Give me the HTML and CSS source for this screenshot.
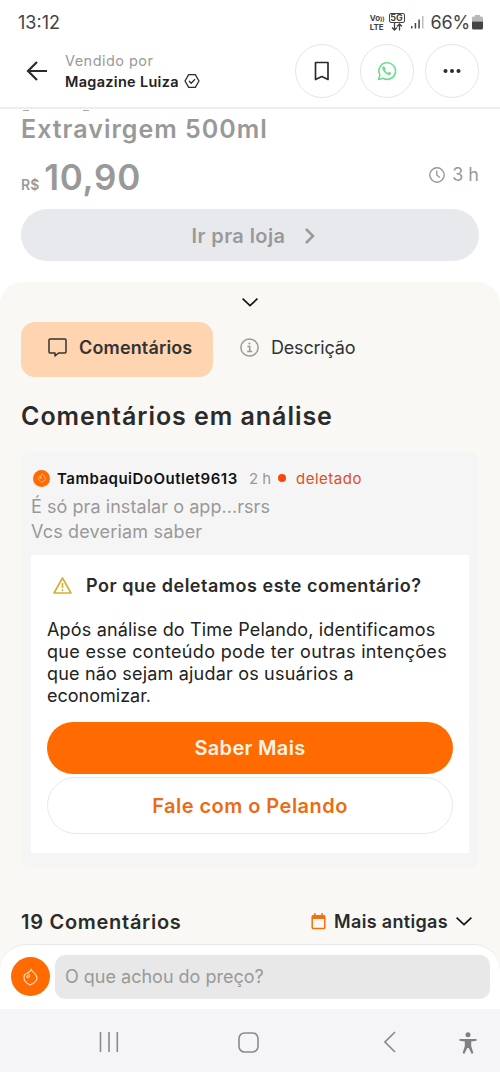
FILE: index.html
```html
<!DOCTYPE html>
<html lang="pt-BR">
<head>
<meta charset="utf-8">
<title>Pelando</title>
<link rel="stylesheet" href="styles.css">
</head>
<body>
<div class="screen">
  <div class="status">
    <span class="clock">13:12</span>
    <div class="signals">
      <span class="volte"><span>Vo<i>))</i></span><span>LTE</span></span>
      <span class="net"><b>5G</b>
        <svg width="12" height="8" viewBox="0 0 12 8" fill="none" stroke="#444" stroke-width="1.3"><path d="M3.5 0v7M1 4.5 3.5 7 6 4.5M8.5 7.5V1M6 3.5 8.500 1 11 3.500"/></svg>
      </span>
      <svg class="bars" width="13" height="14" viewBox="0 0 13 14"><path d="M0 11h1.500v2.500H0zM3.700 8h1.500v5.500H3.700zM7.300 4.500h1.500v9H7.300z" fill="#444"/><path d="M11 1h1.500v12.500H11z" fill="#bbb"/></svg>
      <span class="percent">66%</span>
      <svg class="battery" width="11" height="15" viewBox="0 0 11 15"><path d="M3 0h5v1.500h1.500A1.500 1.500 0 0 1 11 3v3.500H0V3a1.500 1.500 0 0 1 1.500-1.500H3z" fill="#b8b8b8"/><path d="M0 6.500h11V13a1.500 1.500 0 0 1-1.500 1.500h-8A1.500 1.500 0 0 1 0 13z" fill="#444"/></svg>
    </div>
  </div>

  <header class="header">
    <svg class="back" width="22" height="20" viewBox="0 0 22 20" fill="none" stroke="#2b2b2b" stroke-width="2.200"><path d="M21 10H2M11 1 2 10l9 9"/></svg>
    <div class="seller">
      <span class="sold-by">Vendido por</span>
      <span class="store"><span class="store-name">Magazine Luiza</span>
        <svg width="16" height="16" viewBox="0 0 16 16" fill="none" stroke="#2b2b2b" stroke-width="1.300" stroke-linejoin="round"><path d="M4.700 1.700h6.600L15 8l-3.700 6.300H4.700L1 8z"/><path d="m5 8 2.200 2.200L11 6.300"/></svg>
      </span>
    </div>
    <div class="actions">
      <span class="round"><svg width="16" height="20" viewBox="0 0 16 20" fill="none" stroke="#2b2b2b" stroke-width="1.700" stroke-linejoin="round"><path d="M1.500 1.500h12.500v17L7.800 15.500 1.500 18.500z"/></svg></span>
      <span class="round"><svg width="20" height="20" viewBox="0 0 20 20" fill="none" stroke="#6edb90" stroke-width="1.600"><path d="M1.600 18.400 2.900 13.900A8.300 8.300 0 1 1 6.100 17.200z" stroke-linejoin="round"/><path d="M7.200 5.400c-.4-.2-.9-.1-1.200.2-.6.600-.9 1.400-.6 2.300.4 1.300 1.200 2.500 2.200 3.500 1.100 1.100 2.400 2 3.900 2.500.9.200 1.900-.1 2.500-.9.300-.4.300-1 .1-1.300l-2-1-1.300 1.200C9.600 11.400 8.500 10.300 8 9.100l.8-1.300z" fill="#6edb90" stroke="none"/></svg></span>
      <span class="round"><svg width="18" height="4" viewBox="0 0 18 4" fill="#2b2b2b"><circle cx="2.500" cy="2" r="2"/><circle cx="9" cy="2" r="2"/><circle cx="15.500" cy="2" r="2"/></svg></span>
    </div>
  </header>

  <section class="product">
    <div class="title"><span class="tails"><i></i><i></i></span><span class="title-line">Extravirgem 500ml</span></div>
    <div class="price-row">
      <span class="currency">R$</span><span class="price">10,90</span>
      <span class="age"><svg width="16" height="16" viewBox="0 0 16 16" fill="none" stroke="#999" stroke-width="1.400"><circle cx="8" cy="8" r="7.200"/><path d="M7.800 3.500V8l3 2.500"/></svg><span class="age-text">3 h</span></span>
    </div>
    <div class="buy"><span class="buy-text">Ir pra loja</span><svg width="10" height="16" viewBox="0 0 10 16" fill="none" stroke="#999" stroke-width="2.500"><path d="m1 1 7 7-7 7"/></svg></div>
  </section>

  <main class="sheet">
    <svg class="grip" width="16" height="9" viewBox="0 0 16 9" fill="none" stroke="#111" stroke-width="1.600"><path d="m.6.700 7.400 7 7.400-7"/></svg>
    <nav class="tabs">
      <span class="tab active"><svg width="19" height="19" viewBox="0 0 19 19" fill="none" stroke="#333" stroke-width="1.500" stroke-linejoin="round"><path d="M2 1h15q1 0 1 1v12q0 1-1 1h-6.500L7 18v-3H2q-1 0-1-1V2q0-1 1-1z"/></svg><span class="tab-main">Comentários</span></span>
      <span class="tab"><svg width="19" height="19" viewBox="0 0 19 19" fill="none" stroke="#999" stroke-width="1.500"><circle cx="9.500" cy="9.500" r="8.600"/><path d="M7.400 8.400h2.300v5M7.200 13.400h5"/><circle cx="9.400" cy="5.500" r="1" fill="#999" stroke="none"/></svg><span class="tab-desc">Descrição</span></span>
    </nav>
    <h1 class="heading">Comentários em análise</h1>
    <article class="comment">
      <div class="meta">
        <span class="mini"><svg width="8" height="10" viewBox="0 0 15 18" fill="none" stroke="#ffd0a5" stroke-width="1.400" stroke-linejoin="round"><path d="M4 5C5.500 4.500 8 3 8 1c.5 3 6 4.500 6 9 0 3.500-3.500 5.500-7 7-3-1.500-6-4-6-7.500 0-2.500 1.500-4 3-4 3 0 3 4 1 4.200-1.500 0-1.400-1.900 0-2"/></svg></span>
        <span class="user">TambaquiDoOutlet9613</span><span class="when">2 h</span><span class="dot"></span><span class="deleted">deletado</span>
      </div>
      <p class="body"><span class="b1">É só pra instalar o app...rsrs</span><br><span class="b2">Vcs deveriam saber</span></p>
      <div class="reason">
        <div class="why"><svg width="19" height="17" viewBox="0 0 19 17" fill="none" stroke="#d6ae2c" stroke-width="1.600" stroke-linejoin="round"><path d="M9.500 1 18 16H1z"/><path d="M9.500 6v5M9.500 12.300v1.700"/></svg><span class="why-text">Por que deletamos este comentário?</span></div>
        <p class="explain"><span class="p1">Após análise do Time Pelando, identificamos</span><br><span class="p2">que esse conteúdo pode ter outras intenções</span><br><span class="p3">que não sejam ajudar os usuários a</span><br><span class="p4">economizar.</span></p>
        <div class="btn solid"><span>Saber Mais</span></div>
        <div class="btn outline"><span>Fale com o Pelando</span></div>
      </div>
    </article>
    <div class="list-head">
      <span class="count">19 Comentários</span>
      <span class="sort"><svg width="15" height="17" viewBox="0 0 15 17"><rect x="1.200" y="2.700" width="12.600" height="12.800" rx="1" fill="none" stroke="#f4700c" stroke-width="1.500"/><path d="M1 2.500h13V6H1zM3.200 0h1.500v3H3.200zM10.300 0h1.500v3h-1.500z" fill="#f4700c"/></svg><span class="sort-text">Mais antigas</span><svg width="16" height="9" viewBox="0 0 16 9" fill="none" stroke="#111" stroke-width="1.600"><path d="m.6.700 7.400 7 7.400-7"/></svg></span>
    </div>
  </main>

  <div class="dock">
    <footer class="composer">
      <span class="avatar"><svg width="15" height="18" viewBox="0 0 15 18" fill="none" stroke="#ffd9b5" stroke-width="1.200" stroke-linejoin="round"><path d="M4 5C5.500 4.500 8 3 8 1c.5 3 6 4.500 6 9 0 3.500-3.500 5.500-7 7-3-1.500-6-4-6-7.500 0-2.500 1.500-4 3-4 3 0 3 4 1 4.200-1.500 0-1.400-1.900 0-2"/></svg></span>
      <span class="input"><span class="placeholder">O que achou do preço?</span></span>
    </footer>
  </div>

  <div class="sysnav">
    <svg class="recents" width="20" height="20" viewBox="0 0 20 20" stroke="#8a8a8a" stroke-width="1.600"><path d="M1.500 0v20M10 0v20M18.300 0v20"/></svg>
    <svg class="home" width="21" height="21" viewBox="0 0 21 21" fill="none" stroke="#8a8a8a" stroke-width="1.600"><rect x="1" y="1" width="19" height="19" rx="5.500"/></svg>
    <svg class="prev" width="12" height="22" viewBox="0 0 12 22" fill="none" stroke="#8a8a8a" stroke-width="1.600"><path d="M11 1 1 11l10 10"/></svg>
    <svg class="access" width="18" height="22" viewBox="0 0 18 22" fill="#808080"><circle cx="9" cy="2.700" r="2.500"/><path d="M.5 7h17v1.800l-5.300.6v4.600l2.200 7.200-1.800.6L9.700 16H8.300l-2.900 5.800-1.800-.6L5.800 14V9.400L.5 8.800z"/></svg>
  </div>
</div>
</body>
</html>
```

FILE: styles.css
```css
* { box-sizing: border-box; }
body { margin: 0; background: #fff; font-family: Inter, sans-serif; color: #2b2b2b; }
svg { display: block; flex: none; }
p, h1 { margin: 0; }
span { white-space: nowrap; }
.screen { width: 500px; height: 1072px; display: flex; flex-direction: column; overflow: hidden; }

.status { height: 44px; flex: none; display: flex; align-items: center; justify-content: space-between; padding: 0 17px 0 18px; color: #444; }
.clock { font-size: 18px; }
.signals { display: flex; align-items: center; }
.volte { display: flex; flex-direction: column; font-size: 8px; line-height: 8px; font-weight: 700; margin-right: 4px; }
.volte i { font-style: normal; font-size: 6px; }
.net { display: flex; flex-direction: column; align-items: center; margin-right: 6px; }
.net b { border: 1px solid #444; border-radius: 2px; font-size: 9px; line-height: 8px; width: 16px; text-align: center; }
.bars { margin-right: 7px; }
.percent { font-size: 18px; letter-spacing: -.2px; margin-right: 2px; }

.header { height: 65px; flex: none; display: flex; align-items: center; padding: 0 21px 10px 26px; border-bottom: 2px solid #ececee; }
.seller { display: flex; flex-direction: column; margin-left: 17px; line-height: 21px; font-size: 14.5px; }
.sold-by { color: #999; letter-spacing: .45px; }
.store { display: flex; align-items: center; gap: 5px; font-weight: 600; color: #222; letter-spacing: .3px; }
.actions { display: flex; gap: 11px; margin-left: auto; }
.round { width: 54px; height: 54px; border: 1px solid #e4e5ea; border-radius: 50%; display: flex; align-items: center; justify-content: center; }

.product { height: 173px; flex: none; padding: 0 21px; color: #999; overflow: hidden; }
.title { font-size: 25px; font-weight: 600; line-height: 32px; height: 36px; letter-spacing: 1px; display: flex; flex-direction: column; justify-content: flex-end; }
.tails { display: flex; gap: 54px; padding: 1px 0 2px 2px; }
.tails i { width: 6px; height: 1px; background: #a5a5a5; }
.price-row { display: flex; align-items: baseline; height: 64px; line-height: 64px; font-weight: 600; }
.currency { font-size: 14px; margin-right: 5px; }
.price { font-size: 35px; letter-spacing: .7px; }
.age { margin-left: auto; align-self: flex-start; margin-top: 19px; display: flex; align-items: center; gap: 7px; font-size: 18px; font-weight: 400; line-height: 22px; }
.buy { height: 52px; border-radius: 26px; background: #e8e9ed; display: flex; align-items: center; justify-content: center; gap: 20px; font-size: 20px; font-weight: 600; letter-spacing: .4px; padding: 1px 0 0 7px; }

.sheet { flex: 1; min-height: 0; background: #f9f8f4; border-radius: 22px 22px 0 0; padding: 16px 21px 0; display: flex; flex-direction: column; }
.grip { align-self: center; }
.tabs { display: flex; margin-top: 15px; height: 55px; flex: none; font-size: 18px; color: #333; }
.tab { display: flex; align-items: center; gap: 12px; padding: 0 27px 4px; }
.active { width: 192px; border-radius: 14px; background: #ffd4b0; font-weight: 600; }
.tab-main { letter-spacing: .15px; }
.tab-desc { letter-spacing: -.2px; }
.heading { font-size: 25px; line-height: 32px; font-weight: 600; letter-spacing: .96px; margin: 23px 0 20px; white-space: nowrap; }
.comment { background: #f5f5f5; border-radius: 10px; height: 416px; flex: none; padding: 13px 10px 0; }
.meta { display: flex; align-items: center; height: 26px; font-size: 15px; padding-left: 2px; }
.mini { width: 17px; height: 17px; border-radius: 50%; background: #ff6b00; display: flex; align-items: center; justify-content: center; margin-right: 7px; }
.user { font-weight: 600; color: #111; width: 192px; letter-spacing: .5px; }
.when { color: #999; width: 29px; }
.dot { width: 8px; height: 8px; border-radius: 50%; background: #fb4408; margin-right: 10px; }
.deleted { color: #e04e22; letter-spacing: .5px; }
.body { font-size: 18px; line-height: 25px; color: #999; margin-top: 3px; letter-spacing: .06px; }
.b2 { letter-spacing: .18px; }
.reason { background: #fff; margin-top: 11px; height: 298px; padding: 15px 16px 0; }
.why { display: flex; align-items: center; height: 30px; gap: 14px; padding-left: 6px; font-size: 18px; font-weight: 600; letter-spacing: .52px; }
.explain { font-size: 18px; line-height: 22px; color: #222; margin: 19px 0 15px; }
.p1 { letter-spacing: .17px; }
.p2 { letter-spacing: .33px; }
.p3 { letter-spacing: .19px; }
.btn { display: flex; align-items: center; justify-content: center; border-radius: 29px; font-size: 20px; font-weight: 600; }
.solid { height: 52px; background: #ff6b00; color: #fff4e8; letter-spacing: .3px; }
.outline { height: 57px; margin-top: 3px; border: 1px solid #e8e9ec; color: #ea6c16; letter-spacing: .47px; }
.list-head { display: flex; align-items: center; justify-content: space-between; height: 30px; margin-top: 39px; padding-right: 7px; font-weight: 600; }
.count { font-size: 20px; letter-spacing: .72px; }
.sort { display: flex; align-items: center; gap: 8px; font-size: 18px; letter-spacing: .33px; padding-bottom: 1px; }

.dock { flex: none; height: 65px; background: #f9f8f4; }
.composer { height: 65px; background: #fff; border-top: 1px solid #e8e8e8; border-radius: 26px 26px 0 0; display: flex; align-items: center; gap: 5px; padding: 0 10px 1px 11px; }
.avatar { width: 39px; height: 39px; flex: none; border-radius: 50%; background: #ff6b00; display: flex; align-items: center; justify-content: center; }
.input { flex: 1; height: 44px; border-radius: 10px; background: #e8e8e8; color: #999; font-size: 18px; display: flex; align-items: center; padding-left: 10px; }

.sysnav { height: 63px; flex: none; background: #f5f5f7; display: flex; align-items: center; padding: 3px 0 0 99px; }
.home { margin-left: 119px; }
.prev { margin-left: 125px; }
.access { margin: 2px 0 0 63px; }
```
